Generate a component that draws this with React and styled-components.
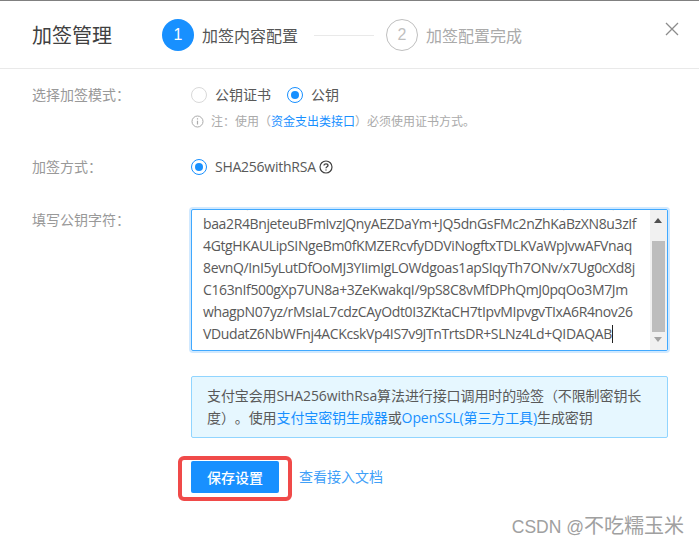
import React from "react";
import styled, { createGlobalStyle } from "styled-components";

const Global = createGlobalStyle`
  html, body { margin: 0; padding: 0; background: #fff; }
  body { font-family: "Open Sans", "Noto Sans CJK SC", sans-serif; font-size: 14px; text-spacing-trim: space-all; }
`;
const Page = styled.div`
  width: 699px; height: 543px; overflow: hidden; position: relative; background: #fff;
  border-top: 1px solid #808080; box-sizing: border-box;
`;
const Header = styled.header`
  height: 68px; display: flex; align-items: center; border-bottom: 1px solid #e9e9e9;
  padding-left: 32px; position: relative; box-sizing: border-box; padding-top: 5px; padding-bottom: 4px;
`;
const Title = styled.h1`
  margin: 0; width: 130px; font: 400 20px/28px "Noto Sans CJK SC", sans-serif; color: #404040;
`;
const StepCircle = styled.span`
  width: 32px; height: 32px; border-radius: 50%; box-sizing: border-box; flex: none;
  display: flex; align-items: center; justify-content: center;
  font: 400 16px "Liberation Sans", sans-serif;
  background: ${p => (p.$active ? "#1890ff" : "#fff")};
  color: ${p => (p.$active ? "#fff" : "#bfbfbf")};
  border: ${p => (p.$active ? "none" : "1px solid #bfbfbf")};
`;
const StepLabel = styled.span`
  margin-left: 8px; font: 400 16px/24px "Noto Sans CJK SC", sans-serif;
  color: ${p => (p.$active ? "#555" : "#aaa")};
`;
const StepLine = styled.span`
  width: 60px; height: 1px; background: #e9e9e9; margin: 0 12px 0 16px; flex: none;
`;
const Close = styled.button`
  position: absolute; right: 20px; top: 21px; width: 14px; height: 14px; padding: 0; border: 0;
  background: none; color: #8c8c8c; display: flex;
`;
const Body = styled.main`
  padding: 15px 31px 0 32px; display: flex; flex-direction: column;
`;
const Row = styled.div`
  display: flex; margin-bottom: ${p => p.$gap || 0}px;
`;
const Label = styled.div`
  width: 159px; flex: none; font: 400 14px/20px "Noto Sans CJK SC", sans-serif; color: #999;
`;
const Field = styled.div`
  flex: 1; min-width: 0; display: flex; flex-direction: column; padding-top: 1px;
`;
const Radios = styled.div`
  display: flex; align-items: center; height: 20px; gap: 16px;
`;
const Radio = styled.label`
  display: flex; align-items: center; gap: 8px; color: #595959;
  font: 400 14px/20px "Open Sans", "Noto Sans CJK SC", sans-serif;
`;
const Dot = styled.span`
  width: 16px; height: 16px; border-radius: 50%; box-sizing: border-box; flex: none;
  border: 1px solid ${p => (p.$on ? "#1890ff" : "#d9d9d9")}; display: flex; align-items: center; justify-content: center;
  &::after { content: ""; width: 8px; height: 8px; border-radius: 50%; background: ${p => (p.$on ? "#1890ff" : "transparent")}; }
`;
const Algo = styled.span`
  letter-spacing: -0.25px;
`;
const Note = styled.div`
  display: flex; align-items: center; gap: 7px; margin-top: 6px; color: #aaa;
  font: 400 12px/20px "Noto Sans CJK SC", sans-serif;
`;
const A = styled.a`
  color: #1890ff; text-decoration: none;
`;
const TextBox = styled.div`
  position: relative; width: 477px; height: 142px; box-sizing: border-box; border: 1px solid #40a9ff;
  border-radius: 2px; box-shadow: 0 0 0 2px rgba(24,144,255,.2); overflow: hidden; background: #fff;
`;
const Lines = styled.div`
  margin-top: -19px; padding-left: 11px; color: #595959; white-space: nowrap;
  font: 400 14px/22px "Open Sans", sans-serif; letter-spacing: -0.37px;
`;
const Line = styled.div``;
const Caret = styled.span`
  display: inline-block; width: 1px; height: 18px; background: #222; vertical-align: -4px;
`;
const Track = styled.div`
  position: absolute; right: 0; top: 0; bottom: 0; width: 17px; background: #f1f1f1;
  display: flex; flex-direction: column; align-items: center;
`;
const Thumb = styled.div`
  position: absolute; top: 31px; left: 2px; width: 13px; height: 91px; background: #bdbdbd;
`;
const Arrow = styled.span`
  position: absolute; left: 4px; width: 0; height: 0; border-left: 4px solid transparent; border-right: 4px solid transparent;
  ${p => (p.$up ? "top: 8px; border-bottom: 5px solid #505050;" : "bottom: 8px; border-top: 5px solid #a3a3a3;")}
`;
const Notice = styled.div`
  width: 477px; height: 62px; box-sizing: border-box; padding: 8px 15px; background: #e6f7ff;
  border: 1px solid #91d5ff; border-radius: 2px; color: #595959;
  font: 400 14px/22px "Open Sans", "Noto Sans CJK SC", sans-serif; letter-spacing: -0.1px;
`;
const Actions = styled.div`
  display: flex; align-items: center; gap: 20px; margin-top: 23px; margin-left: 159px; position: relative;
`;
const Save = styled.button`
  width: 88px; height: 32px; border: 0; border-radius: 2px; background: #1890ff; color: #fff; padding: 0;
  font: 500 14px "Noto Sans CJK SC", sans-serif;
`;
const Highlight = styled.span`
  position: absolute; left: -13px; top: -5px; width: 114px; height: 45px; box-sizing: border-box;
  border: 4px solid #f04a49; border-radius: 6px; pointer-events: none;
`;
const DocLink = styled(A)`
  font: 400 14px/20px "Noto Sans CJK SC", sans-serif; color: #40a0f8; margin-bottom: 2px;
`;
const Watermark = styled.div`
  position: absolute; right: 15px; bottom: 5px; color: #a0a0a0; white-space: nowrap;
  font: 400 17.5px/22px "Liberation Sans", "Noto Sans CJK SC", sans-serif;
`;
const WatermarkName = styled.span`
  font-size: 20px;
`;

const key = [
  "BFmIvzJAEZDaYmKaBzXN8u3zIfKMZERcvfDDVNnmIfDPhmJ0OoM7JmKVaW",
  "baa2R4BnjeteuBFmIvzJQnyAEZDaYm+JQ5dnGsFMc2nZhKaBzXN8u3zIf",
  "4GtgHKAULipSINgeBm0fKMZERcvfyDDViNogftxTDLKVaWpJvwAFVnaq",
  "8evnQ/InI5yLutDfOoMJ3YIimIgLOWdgoas1apSIqyTh7ONv/x7Ug0cXd8j",
  "C163nIf500gXp7UN8a+3ZeKwakqI/9pS8C8vMfDPhQmJ0pqOo3M7Jm",
  "whagpN07yz/rMsIaL7cdzCAyOdt0I3ZKtaCH7tIpvMIpvgvTIxA6R4nov26",
];

export default function App() {
  return (
    <Page>
      <Global />
      <Header>
        <Title>加签管理</Title>
        <StepCircle $active>1</StepCircle>
        <StepLabel $active>加签内容配置</StepLabel>
        <StepLine />
        <StepCircle>2</StepCircle>
        <StepLabel>加签配置完成</StepLabel>
        <Close aria-label="关闭">
          <svg width="14" height="14" viewBox="0 0 14 14" fill="none" stroke="currentColor" strokeWidth="1.3">
            <path d="M1 1l12 12M13 1L1 13" />
          </svg>
        </Close>
      </Header>
      <Body>
        <Row $gap={25}>
          <Label>选择加签模式：</Label>
          <Field>
            <Radios>
              <Radio><Dot />公钥证书</Radio>
              <Radio><Dot $on />公钥</Radio>
            </Radios>
            <Note>
              <svg width="13" height="13" viewBox="0 0 13 13" fill="none" stroke="#aaa">
                <circle cx="6.5" cy="6.5" r="5.5" />
                <path d="M6.5 5.7v3.8M6.5 3.2v1.2" strokeWidth="1.2" />
              </svg>
              <span>注：使用（<A>资金支出类接口</A>）必须使用证书方式。</span>
            </Note>
          </Field>
        </Row>
        <Row $gap={32}>
          <Label>加签方式：</Label>
          <Field>
            <Radios>
              <Radio>
                <Dot $on />
                <Algo>SHA256withRSA</Algo>
                <svg style={{ marginLeft: -5 }} width="14" height="14" viewBox="0 0 14 14" fill="none" stroke="#404040">
                  <circle cx="7" cy="7" r="6" strokeWidth="1.2" />
                  <path d="M5 5.5C5 4.3 6 3.8 7 3.8S9 4.4 9 5.4C9 6.8 7 6.7 7 8.3M7 9.4v1.2" strokeWidth="1.3" />
                </svg>
              </Radio>
            </Radios>
          </Field>
        </Row>
        <Row $gap={25}>
          <Label>填写公钥字符：</Label>
          <TextBox>
            <Lines>
              {key.map(l => <Line key={l}>{l}</Line>)}
              <Line>VDudatZ6NbWFnj4ACKcskVp4IS7v9JTnTrtsDR+SLNz4Ld+QIDAQAB<Caret /></Line>
            </Lines>
            <Track>
              <Arrow $up />
              <Thumb />
              <Arrow />
            </Track>
          </TextBox>
        </Row>
        <Row>
          <Label />
          <Notice>
            支付宝会用SHA256withRsa算法进行接口调用时的验签（不限制密钥长度）。使用<A>支付宝密钥生成器</A>或<A>OpenSSL(第三方工具)</A>生成密钥
          </Notice>
        </Row>
        <Actions>
          <Save>保存设置</Save>
          <Highlight />
          <DocLink>查看接入文档</DocLink>
        </Actions>
      </Body>
      <Watermark>CSDN @<WatermarkName>不吃糯玉米</WatermarkName></Watermark>
    </Page>
  );
}
